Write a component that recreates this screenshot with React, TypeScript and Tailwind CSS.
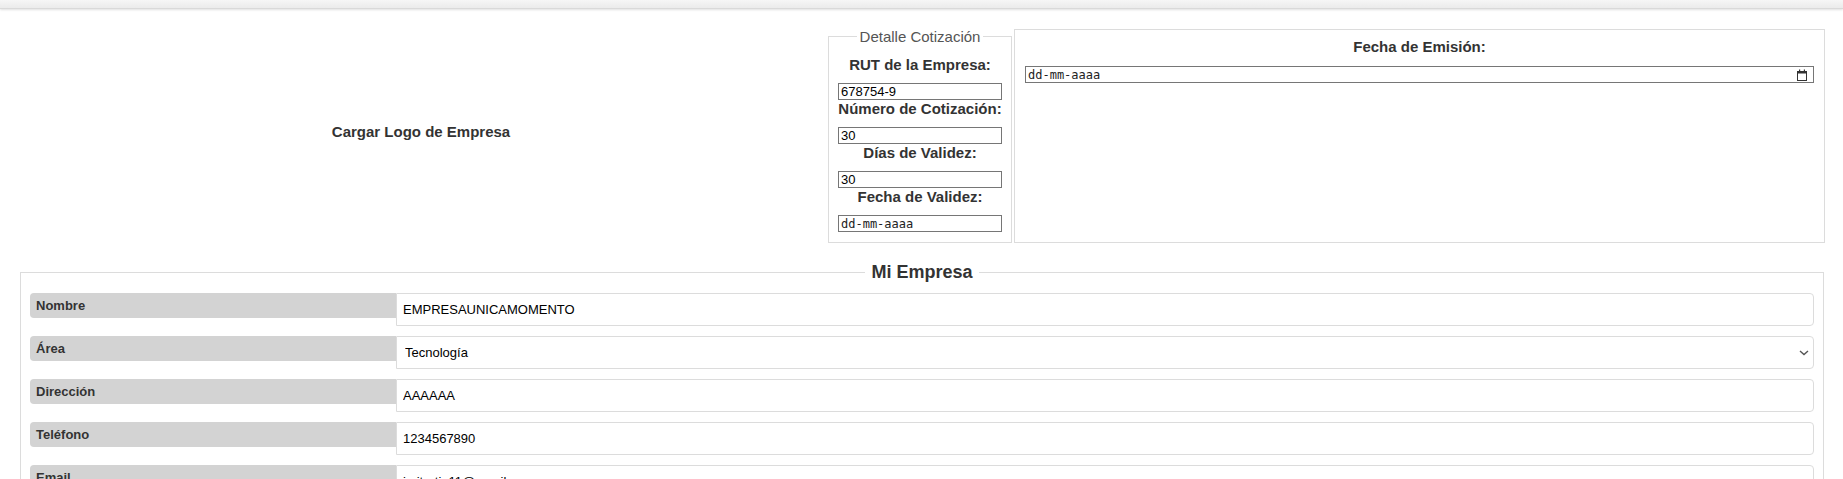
import React from "react";

type Row = {
  label: string;
  value: string;
  kind?: "select";
};

const rows: Row[] = [
  { label: "Nombre", value: "EMPRESAUNICAMOMENTO" },
  { label: "Área", value: "Tecnología", kind: "select" },
  { label: "Dirección", value: "AAAAAA" },
  { label: "Teléfono", value: "1234567890" },
  { label: "Email", value: "jmitarti_11@gmail.com" },
];

function CalendarIcon() {
  return (
    <svg width="10" height="12" viewBox="0 0 10 12" className="shrink-0">
      <rect x="0.5" y="2.5" width="9" height="9" fill="none" stroke="#333" strokeWidth="1" />
      <rect x="0" y="2" width="10" height="2.5" fill="#333" />
      <rect x="2" y="0.5" width="1.2" height="2" fill="#333" />
      <rect x="6.8" y="0.5" width="1.2" height="2" fill="#333" />
    </svg>
  );
}

function DateField({ icon }: { icon?: boolean }) {
  return (
    <div className="flex h-[17px] w-full items-center justify-between border border-[#767676] bg-white pl-[2px] pr-[6px]">
      <span className="font-['DejaVu_Sans_Mono',monospace] text-[12px] leading-none text-[#222]">dd-mm-aaaa</span>
      {icon && <CalendarIcon />}
    </div>
  );
}

function SmallLabel({ children }: { children: React.ReactNode }) {
  return <div className="mb-[10px] text-center text-[15px] font-bold leading-[17px] text-[#333]">{children}</div>;
}

function SmallInput({ value }: { value: string }) {
  return (
    <input
      readOnly
      value={value}
      className="block h-[17px] w-full border border-[#767676] bg-white px-[2px] text-[13px] leading-none text-black outline-none"
    />
  );
}

export default function App() {
  return (
    <div className="min-h-screen bg-white font-['Liberation_Sans',Arial,sans-serif]">
      <div className="h-[9px] border-b border-[#d9d9d9] bg-gradient-to-b from-[#f6f6f6] to-[#ebebeb] shadow-[0_1px_2px_rgba(0,0,0,0.12)]" />

      <div className="mt-[20px] flex pl-[16px] pr-[18px]">
        <div className="flex w-[810px] shrink-0 items-center justify-center pb-[7px]">
          <span className="text-[15px] font-bold text-[#333]">Cargar Logo de Empresa</span>
        </div>

        <fieldset className="mx-[2px] w-[184px] shrink-0 border border-[#dcdcdc] px-[9px] pt-[12px] pb-[10px]">
          <legend className="mx-auto px-[3px] text-[15px] leading-[15px] text-[#555]">Detalle Cotización</legend>
          <SmallLabel>RUT de la Empresa:</SmallLabel>
          <SmallInput value="678754-9" />
          <SmallLabel>Número de Cotización:</SmallLabel>
          <SmallInput value="30" />
          <SmallLabel>Días de Validez:</SmallLabel>
          <SmallInput value="30" />
          <SmallLabel>Fecha de Validez:</SmallLabel>
          <DateField />
        </fieldset>

        <div className="flex-1 border border-[#dcdcdc] px-[10px] pt-[8px]">
          <div className="mb-[11px] text-center text-[15px] font-bold leading-[17px] text-[#333]">Fecha de Emisión:</div>
          <DateField icon />
        </div>
      </div>

      <fieldset className="mt-[19px] ml-[20px] mr-[19px] border border-[#dcdcdc] px-[9px] pt-[10px] pb-[10px]">
        <legend className="mx-auto px-[6px] text-[18px] font-bold leading-[21px] text-[#333]">Mi Empresa</legend>
        {rows.map((r) => (
          <div key={r.label} className="mb-[10px] flex items-start">
            <div className="h-[25px] w-[366px] shrink-0 rounded-l-[4px] bg-[#d3d3d3] pl-[6px] text-[13px] font-bold leading-[25px] text-[#333]">
              {r.label}
            </div>
            {r.kind === "select" ? (
              <div className="relative flex-1">
                <select
                  defaultValue={r.value}
                  className="h-[33px] w-full appearance-none rounded-r-[4px] border border-[#dcdcdc] bg-white pl-[8px] pr-[24px] text-[13px] text-black outline-none"
                >
                  <option>Tecnología</option>
                  <option>Salud</option>
                  <option>Educación</option>
                </select>
                <svg
                  width="10"
                  height="6"
                  viewBox="0 0 10 6"
                  className="pointer-events-none absolute right-[5px] top-[14px]"
                >
                  <path d="M1 1l4 3.5L9 1" fill="none" stroke="#555" strokeWidth="1.4" />
                </svg>
              </div>
            ) : (
              <input
                readOnly
                value={r.value}
                className="h-[33px] flex-1 rounded-r-[4px] border border-[#dcdcdc] bg-white px-[6px] text-[13px] text-black outline-none"
              />
            )}
          </div>
        ))}
      </fieldset>
    </div>
  );
}
